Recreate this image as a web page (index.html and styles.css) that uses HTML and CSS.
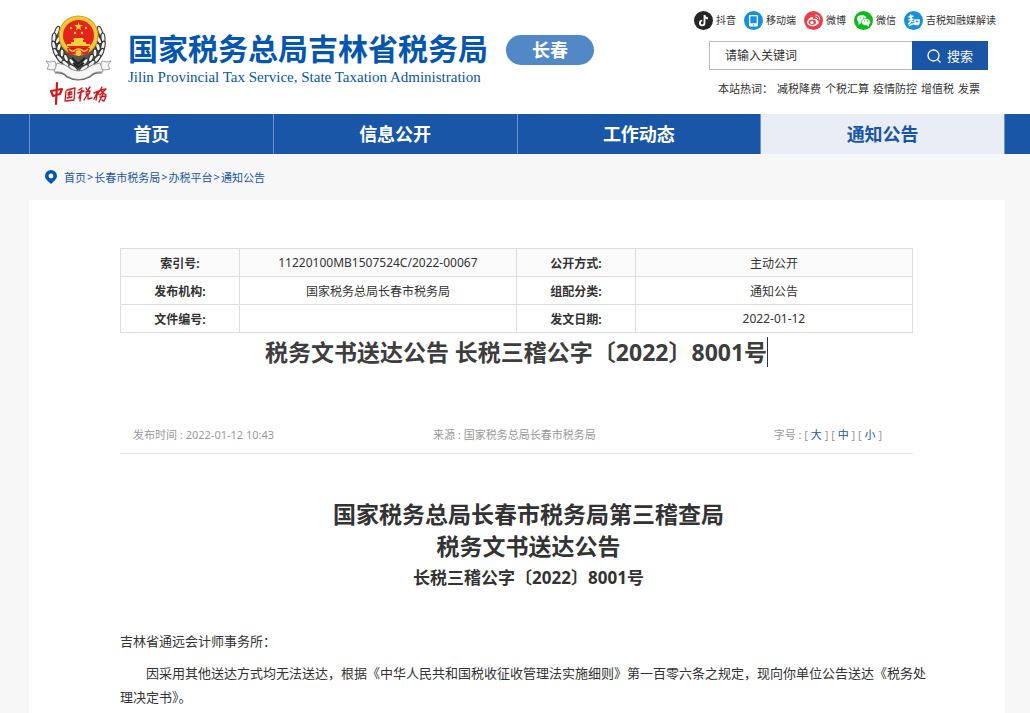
FILE: index.html
```html
<!DOCTYPE html>
<html lang="zh-CN">
<head>
    <meta charset="UTF-8">
    <meta name="viewport" content="width=device-width, initial-scale=1.0">
    <title>税务文书送达公告</title>
    <link rel="stylesheet" href="styles.css">
</head>
<body>
    <header class="header">
        <a class="logo" href="#">
            <svg class="emblem" viewBox="0 0 68 92" width="68" height="92" aria-hidden="true">
                <defs>
                    <!-- one side of the wheat ears -->
                    <g id="ears" fill="#f2f2ee" stroke="#333" stroke-width="1.1">
                        <path d="M14 12Q4 30 14 46l14 10 6-2V36L18 26z" fill="#55554f" stroke="none"/>
                        <ellipse cx="12" cy="15" rx="2" ry="5" transform="rotate(20 12 15)"/>
                        <ellipse cx="9" cy="22" rx="2" ry="5" transform="rotate(5 9 22)"/>
                        <ellipse cx="13" cy="24" rx="2" ry="4" transform="rotate(25 13 24)"/>
                        <ellipse cx="9" cy="30" rx="2" ry="5" transform="rotate(-12 9 30)"/>
                        <ellipse cx="14" cy="31" rx="2" ry="4" transform="rotate(15 14 31)"/>
                        <ellipse cx="11" cy="37" rx="2" ry="5" transform="rotate(-25 11 37)"/>
                        <ellipse cx="17" cy="37" rx="2" ry="4"/>
                        <ellipse cx="15" cy="43" rx="2" ry="5" transform="rotate(-40 15 43)"/>
                        <ellipse cx="21" cy="42" rx="2" ry="4" transform="rotate(-20 21 42)"/>
                        <ellipse cx="21" cy="48" rx="2" ry="5" transform="rotate(-50 21 48)"/>
                        <ellipse cx="27" cy="46" rx="2" ry="4" transform="rotate(-40 27 46)"/>
                        <ellipse cx="28" cy="52" rx="2" ry="5" transform="rotate(-55 28 52)"/>
                    </g>
                </defs>
                <use href="#ears"/>
                <use href="#ears" transform="matrix(-1 0 0 1 67 0)"/>
                <path d="M27 42l6 6 7-6M28 47l5 4 6-4" fill="none" stroke="#222" stroke-width="2"/>
                <circle cx="33.500" cy="19.500" r="20" fill="#d99a18"/>
                <circle cx="33.500" cy="19.500" r="19" fill="#f8c83a"/>
                <circle cx="33.500" cy="19.500" r="15.500" fill="#e5231d"/>
                <g fill="#f9cf3b">
                    <path d="M33.500 6l1 3h3.500l-2.800 2 1 3.400-2.700-2-2.700 2 1-3.400-2.800-2h3.500z"/>
                    <circle cx="26" cy="12" r="1.200"/><circle cx="41" cy="12" r="1.200"/>
                    <circle cx="30" cy="17" r="1.200"/><circle cx="37" cy="17" r="1.200"/>
                    <path d="M29 22h9l1 2h-1v2h3v2h4v2H22v-2h4v-2h3v-2h-1z"/>
                </g>
                <path d="M22 32h23l-3 4H25z" fill="#c9151a"/>
                <path d="M22 33q5-1 8 1h7q3-2 8-1l-3 6-5-1q-3 4-7 0l-5 1z" fill="#e5231d"/>
                <path d="M24 33q4 4 6 1 3-2 7 0 2 3 6-1" fill="none" stroke="#f8c83a" stroke-width="1.500"/>
                <circle cx="33.500" cy="37" r="3" fill="#f8c83a"/>
                <!-- ribbon -->
                <g fill="#f6f6f6" stroke="#8a8a8a" stroke-width=".8">
                    <path d="M1 45l4 1 5-1 2 8-5 1-5-1 2-4z"/>
                    <path d="M66 45l-4 1-5-1-2 8 5 1 5-1-2-4z"/>
                    <path d="M12 47q9 1 14 6 7 4 15 0 5-5 14-6l3 9q-9-1-13 4-11 7-23 0-4-5-13-4z"/>
                </g>
                <path d="M10 57q8-1 12 4 11 6 23 0 4-5 12-4" fill="none" stroke="#666" stroke-width="1.200"/>
                <!-- brush signature -->
                <g fill="none" stroke="#cf1719" stroke-linecap="round" stroke-linejoin="round">
                    <path d="M6 75l2 5M6 75l11-2-2 5-7 2M12 67l-1 21" stroke-width="2.200"/>
                    <path d="M21 75l-1 10M22 74l8-2-1 12-8 1M23 77l4-1M25 75l-1 6M23 79l4-1M22 82l5-1" stroke-width="1.300"/>
                    <path d="M37 72l-3 2M33 77l6-2M37 74l-3 8M36 77l-1 8M41 72l1 2M45 71l-2 3M41 76l4-1-1 3-3 0M42 79l-3 5M43 79l0 4 4-1" stroke-width="1.400"/>
                    <path d="M49 77l5-2-2 3 2 0M52 77l-3 6M52 79l-1 5M57 71l-3 5M56 74l5-1-6 6M56 75l5 4M55 81l6-1-2 5-2-1M58 78l-4 8" stroke-width="1.400"/>
                </g>
            </svg>
            <span class="logo-text">
                <strong class="logo-cn">国家税务总局吉林省税务局</strong>
                <span class="logo-en">Jilin Provincial Tax Service, State Taxation Administration</span>
            </span>
            <span class="city">长春</span>
        </a>
        <div class="tools">
            <ul class="social">
                <li><a href="#">
                    <svg viewBox="0 0 19 19" width="19" height="19"><circle cx="9.500" cy="9.500" r="9.500" fill="#262628"/><path d="M10.500 4v8a2.300 2.300 0 1 1-2.300-2.300M10.500 4.500q.5 2.500 3.500 3" fill="none" stroke="#fff" stroke-width="1.800"/></svg>抖音</a></li>
                <li><a href="#">
                    <svg viewBox="0 0 19 19" width="19" height="19"><circle cx="9.500" cy="9.500" r="9.500" fill="#1590dc"/><rect x="5" y="4" width="9" height="11.500" rx="1" fill="#fff"/><path d="M6.300 5.300h6.400v7H6.300z" fill="#1590dc"/><circle cx="9.500" cy="14" r=".7" fill="#1590dc"/></svg>移动端</a></li>
                <li><a href="#">
                    <svg viewBox="0 0 19 19" width="19" height="19"><circle cx="9.500" cy="9.500" r="9.500" fill="#e9414c"/><path d="M3 11q1-4 5-5 2 0 1 2 4-1 4 1 3 2 1 4-3 3-7 2-4-1-4-4z" fill="#fff"/><ellipse cx="8.300" cy="11.300" rx="3.700" ry="2.700" fill="#e9414c"/><circle cx="8" cy="11.500" r="1.700" fill="#fff"/><path d="M11.500 4q4 0 4 4.500M11.500 6q2 0 2 2" fill="none" stroke="#fff"/></svg>微博</a></li>
                <li><a href="#">
                    <svg viewBox="0 0 19 19" width="19" height="19"><circle cx="9.500" cy="9.500" r="9.500" fill="#0abb19"/><ellipse cx="7.800" cy="8" rx="4.800" ry="4" fill="#fff"/><path d="M4.500 10v4l4-3z" fill="#fff"/><ellipse cx="12" cy="11" rx="4.300" ry="3.600" fill="#fff" stroke="#0abb19" stroke-width=".7"/><path d="M12 14l3 1.500V13z" fill="#fff"/><path d="M5.700 7h1M9 7h1M10 10h1M13 10h1" stroke="#0abb19"/></svg>微信</a></li>
                <li><a href="#">
                    <svg viewBox="0 0 19 19" width="19" height="19"><circle cx="9.500" cy="9.500" r="9.500" fill="#1590dc"/><path d="M7 3.500l-1.500 3M4.500 6l5-1M7 5v4M4.500 9l5-1M7 9q0 3-3 4M7 9l2.500 2M11 9h4v3h-4zM5 15q4-3 6-2 2 1 4 0" fill="none" stroke="#fff" stroke-width="1.500"/></svg>吉税知融媒解读</a></li>
            </ul>
            <form class="search">
                <input type="text" aria-label="搜索关键词" placeholder="请输入关键词">
                <button type="button">
                    <svg viewBox="0 0 14 14" width="14" height="14"><circle cx="6.500" cy="6.500" r="5.500" fill="none" stroke="#fff" stroke-width="1.300"/><path d="M10.500 10.500l3 3" stroke="#fff" stroke-width="1.300"/></svg>搜索</button>
            </form>
            <p class="hot">本站热词： <a href="#">减税降费</a> <a href="#">个税汇算</a> <a href="#">疫情防控</a> <a href="#">增值税</a> <a href="#">发票</a></p>
        </div>
    </header>

    <nav class="nav">
        <ul>
            <li><a href="#">首页</a></li>
            <li><a href="#">信息公开</a></li>
            <li><a href="#">工作动态</a></li>
            <li><a class="active" href="#">通知公告</a></li>
        </ul>
    </nav>

    <div class="crumbs">
        <svg viewBox="0 0 12 14" width="12" height="14"><path d="M6 0a6 6 0 0 1 6 6c0 3-3 5-6 8C3 11 0 9 0 6a6 6 0 0 1 6-6z" fill="#0456ae"/><circle cx="6" cy="6" r="2.400" fill="#fff"/></svg>
        <span class="path"><a href="#">首页</a>&gt;<a href="#">长春市税务局</a>&gt;<a href="#">办税平台</a>&gt;<a href="#">通知公告</a></span>
    </div>

    <main class="content">
        <table class="info">
            <tr><th>索引号:</th><td>11220100MB1507524C/2022-00067</td><th>公开方式:</th><td>主动公开</td></tr>
            <tr><th>发布机构:</th><td>国家税务总局长春市税务局</td><th>组配分类:</th><td>通知公告</td></tr>
            <tr><th>文件编号:</th><td></td><th>发文日期:</th><td>2022-01-12</td></tr>
        </table>
        <h1 class="title"><span>税务文书送达公告 长税三稽公字〔2022〕8001号</span></h1>
        <div class="meta">
            <span>发布时间 : 2022-01-12 10:43</span>
            <span>来源 : 国家税务总局长春市税务局</span>
            <span>字号 : [ <a href="#">大</a> ] [ <a href="#">中</a> ] [ <a href="#">小</a> ]</span>
        </div>
        <article class="article">
            <h2>国家税务总局长春市税务局第三稽查局<br>税务文书送达公告</h2>
            <h3>长税三稽公字〔2022〕8001号</h3>
            <p>吉林省通远会计师事务所：</p>
            <p class="indent">因采用其他送达方式均无法送达，根据《中华人民共和国税收征收管理法实施细则》第一百零六条之规定，现向你单位公告送达《税务处理决定书》。</p>
        </article>
    </main>
</body>
</html>
```
FILE: styles.css
```css
* {
    box-sizing: border-box;
}
body {
    margin: 0;
    background: #f7f7f7;
    color: #333;
    font-family: "Noto Sans", "Noto Sans CJK SC", sans-serif;
    font-size: 12px;
}
a {
    color: inherit;
    text-decoration: none;
}
ul, p, h1, h2, h3 {
    margin: 0;
    padding: 0;
    list-style: none;
}
.header {
    display: flex;
    justify-content: space-between;
    height: 114px;
    padding: 0 34px 0 45px;
    background: #fff;
}
.logo {
    display: flex;
    align-items: flex-start;
}
.emblem {
    margin-top: 16px;
    overflow: visible;
}
.logo-text {
    display: flex;
    flex-direction: column;
    margin: 32px 18px 0 15px;
    color: #0456ae;
    white-space: nowrap;
}
.logo-cn {
    font-size: 30px;
    line-height: 34px;
}
.logo-en {
    font-family: "Liberation Serif", serif;
    font-size: 15px;
    line-height: 22px;
}
.city {
    width: 88px;
    margin-top: 35px;
    border-radius: 15px;
    background: #5388c7;
    color: #fff;
    font-size: 18px;
    font-weight: bold;
    line-height: 30px;
    text-align: center;
}
.tools {
    display: flex;
    flex-direction: column;
    align-items: flex-end;
    padding-top: 11px;
}
.social {
    display: flex;
    gap: 8px;
    font-size: 10px;
}
.social a {
    display: flex;
    align-items: center;
    gap: 3px;
    line-height: 19px;
}
.search {
    display: flex;
    width: 279px;
    height: 29px;
    margin: 11px 8px 0 0;
}
.search input {
    flex: 1;
    min-width: 0;
    padding: 0 15px;
    border: 1px solid #bbb;
    border-right: 0;
    font: inherit;
}
.search input::placeholder {
    color: #333;
}
.search button {
    display: flex;
    align-items: center;
    justify-content: center;
    gap: 6px;
    width: 76px;
    padding: 0;
    border: 0;
    background: #1956a8;
    color: #fff;
    font: inherit;
    font-size: 13px;
}
.hot {
    display: flex;
    gap: 4px;
    margin: 10px 16px 0 0;
    font-size: 11px;
    line-height: 18px;
}
.nav {
    padding: 0 25px 0 29px;
    background: #1956a8;
}
.nav ul {
    display: flex;
    border-left: 1px solid #6d95c9;
}
.nav li {
    flex: 1;
    border-right: 1px solid #6d95c9;
}
.nav a {
    display: block;
    color: #fff;
    font-size: 18px;
    font-weight: bold;
    line-height: 40px;
    text-align: center;
}
.nav .active {
    background: #e8edf6;
    color: #1956a8;
}
.crumbs {
    display: flex;
    align-items: center;
    gap: 7px;
    height: 46px;
    padding-left: 45px;
    color: #1956a8;
    font-size: 11px;
}
.path {
    display: flex;
    gap: 1px;
}
.content {
    margin: 0 25px 0 29px;
    padding: 48px 92px 40px 91px;
    background: #fff;
}
.info {
    width: 100%;
    border-collapse: collapse;
    table-layout: fixed;
    text-align: center;
}
.info th, .info td {
    height: 28px;
    padding: 0;
    border: 1px solid #ddd;
}
.info th {
    width: 15%;
}
.info tr:first-child {
    background: #fbfbfb;
}
.title {
    color: #3d3d3d;
    font-size: 23px;
    line-height: 38px;
    text-align: center;
}
.title span {
    display: inline-block;
    border-right: 1px solid #333;
    line-height: 30px;
}
.meta {
    display: grid;
    grid-template-columns: 300px 1fr auto;
    margin-top: 46px;
    padding: 0 31px 0 13px;
    border-bottom: 1px solid #e5e5e5;
    color: #999;
    font-size: 11px;
    line-height: 36px;
}
.meta a {
    color: #1956a8;
}
.article {
    padding-top: 44px;
    font-size: 13px;
    line-height: 24px;
}
.article h2, .article h3 {
    padding-left: 24px;
    line-height: 32px;
    text-align: center;
}
.article h2 {
    font-size: 23px;
}
.article h3 {
    font-size: 17px;
}
.article p {
    margin: 8px -14px 0 0;
}
.article h3 + p {
    margin-top: 35px;
}
.indent {
    text-indent: 2em;
}
```
